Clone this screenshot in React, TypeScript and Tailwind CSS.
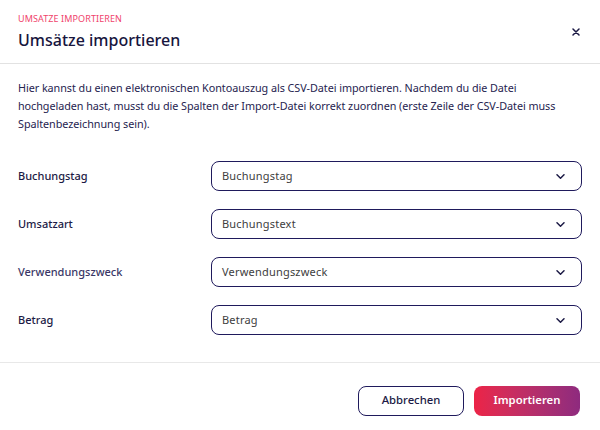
import React from "react";

const rows = [
  { label: "Buchungstag", value: "Buchungstag", labelCls: "text-[#1c1a45]" },
  { label: "Umsatzart", value: "Buchungstext", labelCls: "text-[#1c1a45]" },
  { label: "Verwendungszweck", value: "Verwendungszweck", labelCls: "text-[#3a3766]" },
  { label: "Betrag", value: "Betrag", labelCls: "text-[#1c1a45]" },
];

function Chevron() {
  return (
    <svg width="9" height="5" viewBox="0 0 9 5" fill="none">
      <path d="M1 0.8l3.5 3.4 3.5-3.4" stroke="#1c1a45" strokeWidth="1.5" strokeLinecap="round" strokeLinejoin="round" />
    </svg>
  );
}

export default function App() {
  return (
    <div className="w-[600px] h-[430px] bg-white flex flex-col" style={{ fontFamily: "'Noto Sans', 'Open Sans', sans-serif" }}>
      <div className="h-[64px] border-b border-[#e2e2e2] flex items-start justify-between pl-[18px] pr-[20px] pt-[13px]">
        <div className="flex flex-col">
          <div className="text-[9px] leading-[12px] text-[#f0436c] tracking-[0.1px]">UMSATZE IMPORTIEREN</div>
          <div className="text-[16px] leading-[22px] mt-[4px] text-[#17153d] font-medium">Umsätze importieren</div>
        </div>
        <svg className="mt-[15px]" width="8" height="8" viewBox="0 0 8 8">
          <path d="M1 1l6 6M7 1l-6 6" stroke="#1c1a45" strokeWidth="1.5" strokeLinecap="round" />
        </svg>
      </div>
      <div className="flex-1 flex flex-col px-[18px] pt-[15px]">
        <p className="text-[10.8px] leading-[18px] text-[#26234f] tracking-[-0.05px] pr-[8px]">
          Hier kannst du einen elektronischen Kontoauszug als CSV-Datei importieren. Nachdem du die Datei hochgeladen hast, musst du die Spalten der Import-Datei korrekt zuordnen (erste Zeile der CSV-Datei muss Spaltenbezeichnung sein).
        </p>
        <div className="flex flex-col gap-[18px] mt-[28px]">
          {rows.map((r) => (
            <div key={r.label} className="flex items-center">
              <div className={`w-[193px] text-[11px] font-medium ${r.labelCls}`}>{r.label}</div>
              <div className="flex-1 h-[30px] border-[1.5px] border-[#1f1a5c] rounded-[8px] flex items-center justify-between pl-[10px] pr-[16px]">
                <span className="text-[11px] text-[#404040] tracking-[0.2px]">{r.value}</span>
                <Chevron />
              </div>
            </div>
          ))}
        </div>
      </div>
      <div className="h-[68px] border-t border-[#e8e8e8] flex items-center justify-end gap-[10px] pr-[20px] pt-[8px]">
        <button className="w-[106px] h-[30px] border-[1.5px] border-[#1f1a5c] rounded-[8px] text-[11.3px] font-medium text-[#1c1a45] bg-white">Abbrechen</button>
        <button className="w-[106px] h-[30px] rounded-[8px] text-[11.3px] font-semibold text-white bg-gradient-to-r from-[#ec2346] to-[#8e2a7e]">Importieren</button>
      </div>
    </div>
  );
}
